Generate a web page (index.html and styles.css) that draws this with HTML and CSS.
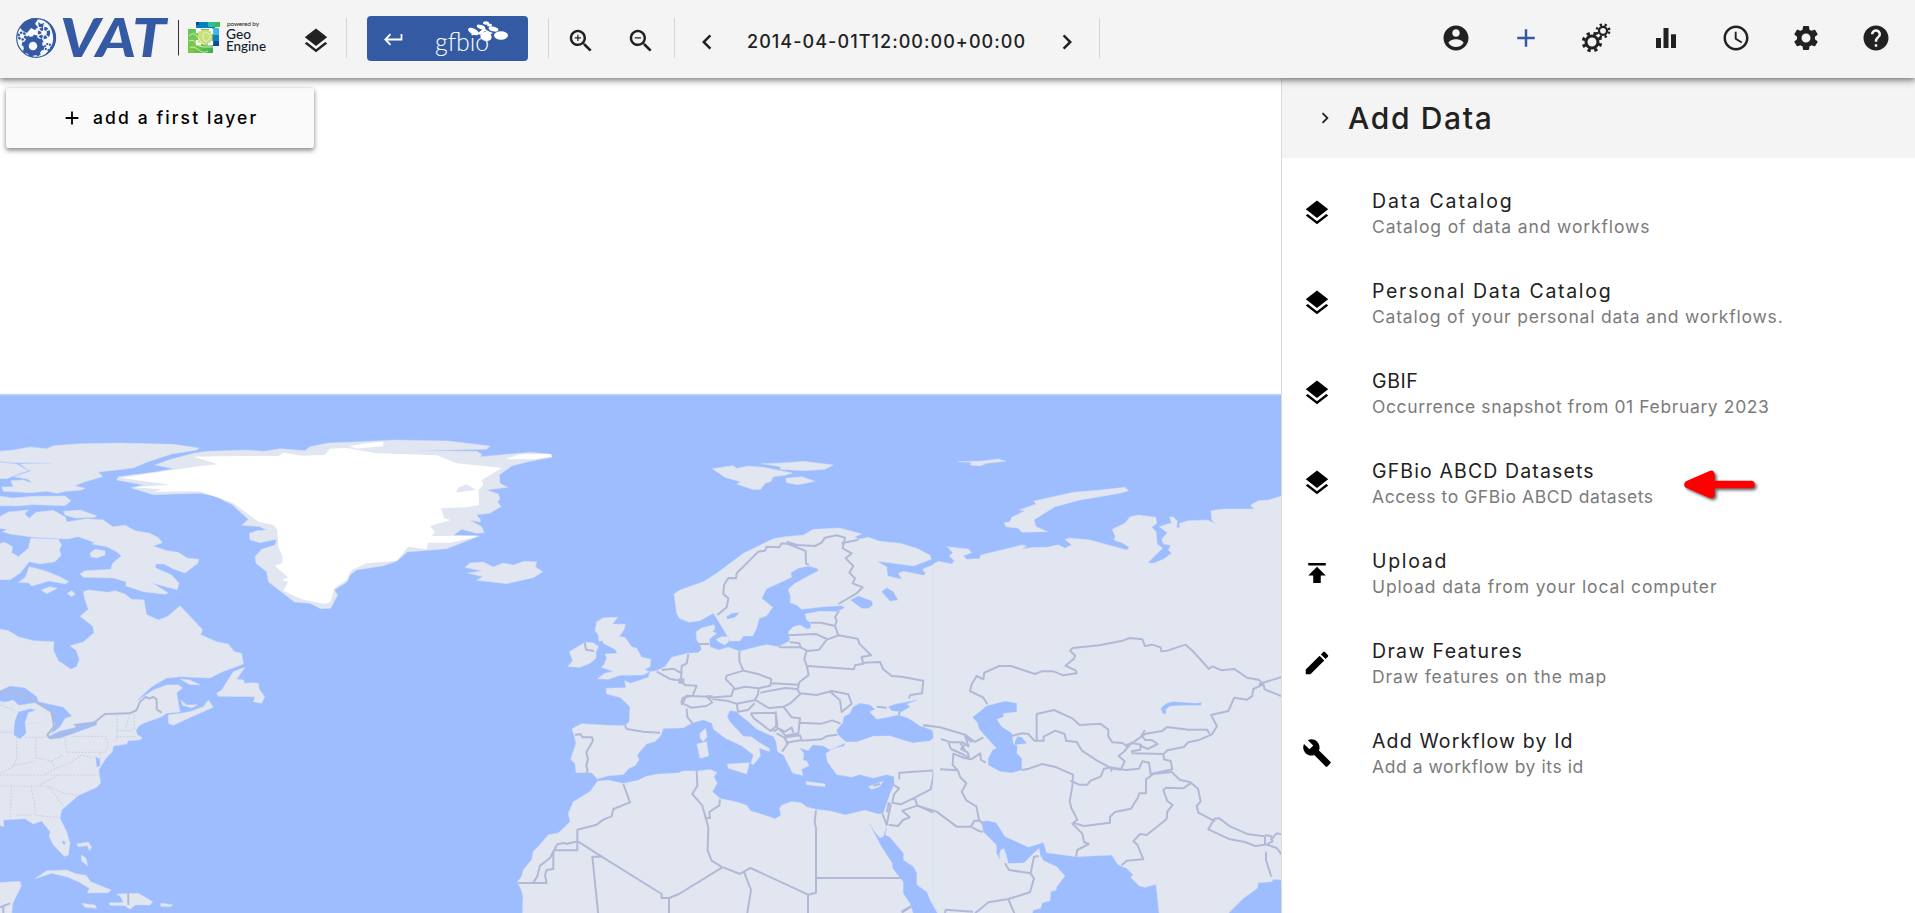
FILE: index.html
```html
<!DOCTYPE html>
<html lang="en">
<head>
<meta charset="utf-8">
<title>VAT</title>
<link rel="stylesheet" href="styles.css">
</head>
<body>
<svg class="defs" width="0" height="0">
  <symbol id="layers" viewBox="0 0 24 24"><path d="M11.99 18.54l-7.37-5.73L3 14.07l9 7 9-7-1.63-1.27-7.38 5.74zM12 16l7.36-5.73L21 9l-9-7-9 7 1.63 1.27L12 16z"/></symbol>
  <symbol id="left" viewBox="0 0 24 24"><path d="M15.41 7.41L14 6l-6 6 6 6 1.41-1.41L10.83 12z"/></symbol>
  <symbol id="right" viewBox="0 0 24 24"><path d="M10 6L8.59 7.41 13.17 12l-4.58 4.59L10 18l6-6z"/></symbol>
  <symbol id="add" viewBox="0 0 24 24"><path d="M19 13h-6v6h-2v-6H5v-2h6V5h2v6h6v2z"/></symbol>
  <symbol id="gear" viewBox="0 0 24 24"><path d="M19.14 12.94c.04-.3.06-.61.06-.94 0-.32-.02-.64-.07-.94l2.03-1.58c.18-.14.23-.41.12-.61l-1.92-3.32c-.12-.22-.37-.29-.59-.22l-2.39.96c-.5-.38-1.03-.7-1.62-.94l-.36-2.54c-.04-.24-.24-.41-.48-.41h-3.84c-.24 0-.43.17-.47.41l-.36 2.54c-.59.24-1.13.57-1.62.94l-2.39-.96c-.22-.08-.47 0-.59.22L2.74 8.87c-.12.21-.08.47.12.61l2.03 1.58c-.05.3-.09.63-.09.94s.02.64.07.94l-2.03 1.58c-.18.14-.23.41-.12.61l1.92 3.32c.12.22.37.29.59.22l2.39-.96c.5.38 1.03.7 1.62.94l.36 2.54c.05.24.24.41.48.41h3.84c.24 0 .44-.17.47-.41l.36-2.54c.59-.24 1.13-.56 1.62-.94l2.39.96c.22.08.47 0 .59-.22l1.92-3.32c.12-.22.07-.47-.12-.61l-2.01-1.58zM12 15.6c-1.98 0-3.6-1.62-3.6-3.6s1.62-3.6 3.6-3.6 3.6 1.62 3.6 3.6-1.62 3.6-3.6 3.6z"/></symbol>
</svg>

<header class="toolbar">
  <svg class="logo" viewBox="0 0 280 78">
    <circle cx="36" cy="38" r="19.3" fill="#f8fafd" stroke="#345aa4" stroke-width="1.2"/>
    <path fill="#345aa4" d="M20 28L24 22 31 18.500 38 19 35 24 38 27 35 30 31 28 27 33 23 31ZM42 18.500A20 20 0 0 1 50 52L42 57C50 51 54 44 53 36C52 28 48 22 42 18.500ZM38 22l3 2 3-1-1 4-4 0z"/>
    <g fill="none" stroke="#345aa4">
      <circle cx="33" cy="46" r="7" stroke-width="5.500"/>
      <circle cx="33" cy="46" r="10" stroke-width="2.600" stroke-dasharray="4 3.850"/>
      <circle cx="22" cy="36" r="3.400" stroke-width="2.400" stroke-dasharray="2.400 1"/>
      <circle cx="44" cy="33" r="4.500" stroke-width="3.400" stroke-dasharray="3 1.200"/>
      <circle cx="48" cy="47" r="3" stroke-width="2" stroke-dasharray="2 1"/>
    </g>
    <text class="vat" x="60" y="57" textLength="106" lengthAdjust="spacingAndGlyphs">VAT</text>
    <path d="M178.500 20v35.500" stroke="#333" stroke-width="1"/>
    <defs><linearGradient id="green" x1="0" y1="0" x2="1" y2="1"><stop offset="0" stop-color="#63c45b"/><stop offset=".5" stop-color="#7dc948"/><stop offset="1" stop-color="#35ab4f"/></linearGradient></defs>
    <path fill="#087fbd" d="M196 22h19v6h-19z"/><path fill="#2ebd9d" d="M208 22h7v5h-7z"/><path fill="#43b649" d="M215 22h5v5h-5z"/>
    <path fill="#3fb8e0" d="M212 28h7v7h-7z"/><path fill="#117fc0" d="M213 35h6v6h-6z"/><path fill="#0b4b9c" d="M213 41h6v5h-6zM196 22h3v3h-3z"/>
    <path fill="url(#green)" d="M188 29h25v24h-25z"/>
    <path fill="#c8df7c" d="M198 30h14v14h-14z"/>
    <g fill="none" stroke="#e8f5d4" stroke-width=".8"><path d="M189 36q4-4 7-1t4 6 6 4 7-2M189 41q5-2 7 2t8 4 9 0M190 47q5-1 9 3t9 1M203 35q1-4 5-2t1 6-5 1-1-5z"/></g>
    <path fill="none" stroke="#fff" stroke-width="2.300" d="M197 33v-3h4M209 30h3v4M212 41v3h-4M201 44h-4v-4"/>
    <text class="geo-small" x="227" y="26.200" textLength="32">powered by</text>
    <text class="geo" x="226" y="39" textLength="25" lengthAdjust="spacingAndGlyphs">Geo</text>
    <text class="geo" x="226" y="51" textLength="40" lengthAdjust="spacingAndGlyphs">Engine</text>
  </svg>
  <div class="cell layers-cell"><svg class="icon"><use href="#layers"/></svg></div>
  <a class="gfbio">
    <svg viewBox="0 0 161 45" width="161" height="45">
      <path fill="none" stroke="#fff" stroke-width="1.800" d="M34.500 18v5.500H18.500M23.500 18.200l-5.200 5.300 5.200 5.300"/>
      <text class="gfbio-text" x="68" y="35" textLength="54" lengthAdjust="spacingAndGlyphs">gfbio</text>
      <path fill="#345aa4" d="M104 7h16v10h-16z"/>
      <g fill="#fff"><ellipse cx="106.500" cy="15.500" rx="6" ry="2.900" transform="rotate(28 106.500 15.500)"/><ellipse cx="119" cy="20.500" rx="5.700" ry="4.600" transform="rotate(12 119 20.500)"/><ellipse cx="134" cy="19.500" rx="7" ry="4.200"/><ellipse cx="126.500" cy="13" rx="5" ry="2.400" transform="rotate(15 126.500 13)"/><ellipse cx="114" cy="11" rx="4.500" ry="2" transform="rotate(20 114 11)"/><ellipse cx="119" cy="7" rx="3" ry="1.700"/><ellipse cx="122.500" cy="9" rx="2.500" ry="1.500"/><path d="M111 17l6-5 4 3 5 2-4 2-4-4-5 4z"/></g>
    </svg>
  </a>
  <div class="cell zoom-cell">
    <svg class="icon" viewBox="0 0 24 24"><path d="M15.500 14h-.79l-.28-.27C15.410 12.590 16 11.110 16 9.500 16 5.910 13.090 3 9.500 3S3 5.910 3 9.500 5.910 16 9.500 16c1.610 0 3.090-.59 4.230-1.570l.27.28v.79l5 4.990L20.490 19l-4.990-5zm-6 0C7.010 14 5 11.990 5 9.500S7.010 5 9.500 5 14 7.010 14 9.500 11.990 14 9.500 14zM12 10h-2v2H9v-2H7V9h2V7h1v2h2v1z"/></svg>
    <svg class="icon" viewBox="0 0 24 24"><path d="M15.500 14h-.79l-.28-.27C15.410 12.590 16 11.110 16 9.500 16 5.910 13.090 3 9.500 3S3 5.910 3 9.500 5.910 16 9.500 16c1.610 0 3.090-.59 4.230-1.570l.27.28v.79l5 4.990L20.490 19l-4.990-5zm-6 0C7.010 14 5 11.990 5 9.500S7.010 5 9.500 5 14 7.010 14 9.500 11.990 14 9.500 14zM7 9h5v1H7z"/></svg>
  </div>
  <div class="cell time-cell">
    <svg class="icon"><use href="#left"/></svg>
    <span class="time">2014-04-01T12:00:00+00:00</span>
    <svg class="icon"><use href="#right"/></svg>
  </div>
  <nav class="actions">
    <svg class="icon" viewBox="0 0 24 24"><path d="M12 2C6.480 2 2 6.480 2 12s4.480 10 10 10 10-4.480 10-10S17.520 2 12 2zm0 3c1.660 0 3 1.340 3 3s-1.340 3-3 3-3-1.340-3-3 1.340-3 3-3zm0 14.200c-2.500 0-4.710-1.280-6-3.220.03-1.990 4-3.080 6-3.080 1.990 0 5.970 1.090 6 3.080-1.290 1.940-3.500 3.220-6 3.220z"/></svg>
    <svg class="icon blue"><use href="#add"/></svg>
    <svg class="icon" viewBox="0 0 30 30"><g fill="none" stroke="#212121"><circle cx="11" cy="19" r="6" stroke-width="3"/><circle cx="11" cy="19" r="8.700" stroke-width="3.200" stroke-dasharray="3.200 3.633" transform="rotate(8 11 19)"/><circle cx="22" cy="7.800" r="4" stroke-width="2.200"/><circle cx="22" cy="7.800" r="6.200" stroke-width="2.600" stroke-dasharray="2.200 2.669" transform="rotate(8 22 7.800)"/></g></svg>
    <svg class="icon" viewBox="0 0 24 24"><path d="M4 12h4v8H4zM10 4h4v16h-4zM16 9h4v11h-4z"/></svg>
    <svg class="icon" viewBox="0 0 24 24"><path d="M11.990 2C6.470 2 2 6.480 2 12s4.470 10 9.990 10C17.520 22 22 17.520 22 12S17.520 2 11.990 2zM12 20c-4.420 0-8-3.580-8-8s3.580-8 8-8 8 3.580 8 8-3.580 8-8 8zM12.500 7H11v6l5.250 3.150.75-1.230-4.500-2.670z"/></svg>
    <svg class="icon"><use href="#gear"/></svg>
    <svg class="icon" viewBox="0 0 24 24"><path d="M12 2C6.480 2 2 6.480 2 12s4.480 10 10 10 10-4.480 10-10S17.520 2 12 2zm1 17h-2v-2h2v2zm2.070-7.750l-.9.920C13.450 12.900 13 13.500 13 15h-2v-.5c0-1.100.45-2.100 1.170-2.830l1.240-1.260c.37-.36.59-.86.59-1.410 0-1.100-.9-2-2-2s-2 .9-2 2H8c0-2.210 1.790-4 4-4s4 1.790 4 4c0 .88-.36 1.680-.93 2.250z"/></svg>
  </nav>
</header>

<main class="workspace">
  <section class="map-pane">
    <svg class="map" viewBox="0 78 1281 835">
      <path class="land" d="M0 394.500h1281v2H0z"/>
      <path class="sea" d="M-2 395h1285v520H-2z"/>

      <!-- North America and Greenland -->
      <g transform="translate(0 390) scale(.33333)">
        <path class="land" d="M-5 184L40 180 90 171 140 176 160 167 240 161 360 159 520 163 597 174 590 180 515 192 440 217 400 234 350 240 295 246 308 260 255 275 225 287 255 295 245 300 200 304 170 310 140 304 90 308 10 304 5 291 40 290 32 272 70 270 95 279 85 268 42 260 95 242 85 240 60 222 160 219 40 218 -5 214ZM-5 216L50 222 85 242 60 250 20 266 -5 266ZM-5 318L40 324 100 319 195 318 213 332 195 347 100 344 50 348 -5 347Z"/>
        <path class="land" d="M-5 382L25 366 85 360 74 372 88 385 108 367 160 361 197 382 200 396 260 386 310 390 338 410 376 406 405 422 450 430 475 443 487 458 460 468 500 482 535 487 562 504 597 508 593 520 555 549 520 537 492 522 468 522 466 533 515 555 537 580 532 599 458 580 505 609 495 613 430 605 378 588 378 575 340 564 250 562 240 552 255 542 332 538 338 520 364 497 350 485 320 470 275 462 285 458 235 440 200 447 100 442 30 432 8 425 22 418 -5 415ZM-5 462L14 457 38 470 35 488 55 500 85 475 92 445 175 448 185 465 178 480 184 495 165 515 120 522 88 515 60 550 30 569 -5 569ZM88 530L135 542 180 560 206 575 195 582 148 573 95 588 85 578 55 577 76 562ZM190 364L240 360 290 377 285 382 225 384 195 375ZM270 490L285 478 315 482 315 495 290 504 272 500ZM124 600L150 590 172 595 140 611ZM202 610L215 602 226 612 215 620Z"/>
        <path class="land" d="M-5 716L25 722 55 740 100 752 162 755 160 780 175 812 212 838 230 830 238 808 228 780 210 767 250 756 282 728 278 708 240 679 265 658 255 630 250 605 265 600 325 607 345 602 375 612 395 628 432 630 440 674 476 690 505 678 540 647 608 719 602 734 650 755 685 762 703 785 725 790 730 822 665 846 630 864 540 860 500 864 455 890 408 934 415 930 460 900 500 885 535 884 548 894 530 908 540 966 500 970 485 980 435 998 420 1005 408 1020 412 1035 427 1043 420 1050 385 1052 380 1062 340 1068 337 1085 318 1105 296 1140 302 1178 290 1192 236 1216 185 1260 180 1285 200 1325 210 1360 205 1395 193 1399 160 1365 148 1340 150 1325 125 1293 100 1302 75 1286 10 1290 12 1310 -5 1305Z"/>
        <path class="land" d="M650 910L665 900 700 845 735 832 710 868 732 870 732 880 760 878 775 880 778 898 794 920 785 940 760 935 765 920 655 919ZM505 975L540 970 570 965 610 950 625 930 640 952 575 980 520 1006 505 1000ZM540 867L570 870 600 884 570 884ZM543 930L560 945 592 944 575 954 548 946ZM105 1466L140 1442 200 1440 230 1452 258 1456 272 1475 333 1500 325 1508 262 1509 268 1495 235 1475 205 1462 155 1450ZM245 1540L285 1545 290 1555 255 1552ZM328 1538L370 1538 362 1520 350 1512 415 1510 458 1535 450 1545 405 1545 390 1558 375 1547 330 1546ZM482 1540L518 1544 512 1550 482 1549ZM230 1362L265 1356 274 1370 270 1383 262 1367 235 1370ZM245 1395L258 1405 263 1428 244 1412ZM-5 1478L60 1474 64 1488 48 1520 38 1542 35 1575 -5 1575Z"/>
        <path class="sea" d="M-5 905L30 888 75 894 110 920 115 935 190 952 215 978 195 985 180 1010 155 1030 165 1002 150 965 105 938 60 945 -5 932ZM42 1035L43 990 55 966 92 956 108 960 75 995 78 1030 60 1047ZM145 1040L180 1023 230 1012 220 1003 290 994 290 1005 180 1045 150 1047ZM287 1100L290 1130 300 1128 300 1108ZM188 1352l8 4-3 8-6-5z"/>
        <path class="land" d="M75 1000L85 968 110 960 140 965 135 1000ZM-5 942L40 930 60 950 45 990 40 1020 -5 1022Z"/>
        <path class="border" d="M-5 908L30 902 100 930 155 965 162 1010 142 1035 150 1045 180 1036 220 1025 235 1005 280 1000 315 972 390 970 410 960 420 935 437 921 447 926 460 921 470 928 470 958 485 968M385 1510v35M0 1552l30-12M10 1550v20"/>
        <path class="state" d="M0 945l45 15M0 1027h40M50 1042v60l-10 28-40 20M75 1042h70M107 1042v62M195 1042l5 45h115l10-20-8-28H215M107 1102l48 12 35-20M155 1114l10 22 50-20 30-22 30 10M40 1127l70-14M0 1155h298M0 1188h145l40 20 50 8M145 1188l45 60M35 1188l-5 98M92 1190l12 50v35l70 8M50 1275h50M118 1185l60-30M165 1136l-32 18M352 975v45l-4 36M390 972l-15 50M403 972v48M352 1022h50M350 1040h60M300 1090v35"/>

        <path class="land" d="M465 225L505 210 580 190 620 184 740 180 790 184 840 176 915 182 930 170 985 159 1080 155 1180 150 1345 153 1470 168 1460 178 1250 182 1430 184 1445 192 1442 200 1590 187 1655 193 1656 202 1590 214 1535 228 1498 255 1500 280 1523 292 1460 300 1495 312 1500 327 1493 335 1503 350 1482 362 1470 370 1430 374 1442 390 1440 396 1410 390 1445 410 1453 428 1430 430 1385 418 1360 436 1438 438 1340 476 1222 486 1190 514 1150 527 1070 540 1050 555 1042 575 1003 600 1013 615 992 655 962 656 930 640 883 636 805 575 800 545 768 520 765 500 785 478 825 465 830 448 780 458 750 450 748 430 770 422 800 420 780 410 725 406 745 388 695 343 667 330 665 322 600 310 460 314 392 293 430 285 350 270 355 260 460 247 520 236Z"/>
        <path class="snow" d="M360 263L600 228 655 223 580 200 720 198 835 198 850 188 905 197 975 195 990 176 1040 174 1130 190 1310 196 1370 220 1505 234 1446 270 1450 284 1436 300 1437 345 1400 352 1322 355 1333 385 1352 390 1290 408 1305 425 1295 438 1430 437 1425 442 1350 458 1285 458 1280 478 1225 470 1190 512 1145 516 1100 520 1055 540 1040 570 1003 595 992 635 975 642 905 628 850 602 865 575 845 570 864 562 825 528 847 518 848 500 835 470 832 420 820 405 775 395 700 340 600 304 462 305 485 298 400 292 510 284ZM1048 168L1110 158 1150 155 1150 168 1070 176ZM1517 207L1560 193 1650 192 1655 200 1600 208Z"/>
        <path class="land" d="M1370 306l5-12 25-10 25 15z"/>
      </g>
      <g transform="translate(330 390) scale(.33333)">
        <path class="land" d="M405 532L420 519 460 516 490 531 520 519 550 525 582 514 620 515 616 530 638 545 610 563 530 581 440 571 458 560 413 549 455 543Z"/>
      </g>

      <!-- Europe and Africa -->
      <g transform="translate(540 440) scale(.33333)">
        <path class="land" d="M96 866L125 851 205 856 255 857 268 845 270 800 240 772 200 762 198 745 258 743 254 722 272 730 325 712 330 695 350 692 375 680 395 652 442 640 475 638 485 628 480 612 470 600 468 575 485 564 522 554 525 565 518 575 530 580 508 598 510 620 535 630 565 622 600 634 660 618 680 614 715 620 745 605 750 600 745 575 760 560 780 555 800 567 812 565 812 548 800 540 795 522 840 514 890 515 915 503 905 497 850 500 785 508 770 495 750 488 752 470 745 448 765 430 835 392 832 385 805 378 775 385 752 398 755 412 680 446 665 475 698 502 680 527 658 535 650 565 638 588 610 588 600 603 570 603 560 585 530 535 520 520 480 542 447 547 418 535 410 520 402 462 420 450 490 425 530 400 610 340 700 296 735 290 790 285 820 268 900 264 965 282 945 290 955 298 985 292 1020 304 1080 310 1130 325 1170 345 1174 358 1120 378 1060 370 1010 364 1040 380 1043 408 1085 418 1075 400 1090 394 1150 406 1157 400 1147 388 1200 366 1210 1425 -53 1425 -51 1369 -57 1347 -68 1327 -55 1309 -50 1289 -25 1259 -20 1234 0 1214 25 1184 55 1179 90 1145 85 1120 100 1085 150 1055 175 1020 155 998 108 998 105 970 92 958 108 910 102 885Z"/>
        <path class="land" d="M170 545L190 533 233 532 218 552 256 553 253 568 238 590 255 592 275 620 290 625 305 652 333 658 330 680 315 688 328 695 310 705 240 706 205 718 172 716 195 700 220 694 183 682 192 674 200 655 195 642 232 640 225 628 190 610 188 602 177 604 175 585 165 572ZM88 635L135 607 160 608 176 620 168 635 168 655 150 670 120 682 83 680 98 662ZM528 598L545 590 566 590 566 605 555 615 535 605ZM517 86L578 77 590 85 625 78 670 82 757 99 735 106 700 110 692 125 675 130 662 148 640 149 590 132 602 126 555 112ZM665 71L740 68 790 64 880 75 855 88 790 92 720 88 722 80ZM737 115L785 110 825 124 775 134 740 128Z"/>
        <path class="sea" d="M170 1018L205 1008 250 1004 268 985 285 978 298 960 292 945 320 912 345 905 362 888 370 866 430 864 455 850 490 840 515 850 520 868 555 895 605 918 640 945 632 970 640 975 662 948 658 925 690 935 688 925 655 905 635 890 610 888 570 845 562 830 570 812 590 815 600 826 625 845 650 868 700 890 708 905 712 935 730 945 745 975 758 1000 790 1007 785 988 808 978 800 962 790 960 792 940 780 925 805 932 818 915 850 918 870 930 915 910 912 918 880 925 857 940 862 965 872 980 890 1004 935 1012 960 1004 1000 1015 1040 1004 1062 1010 1062 1035 1050 1060 1040 1090 1030 1118 1015 1122 975 1110 915 1124 870 1112 830 1108 800 1100 785 1088 755 1084 725 1095 718 1105 722 1125 705 1136 690 1130 632 1112 620 1095 590 1085 540 1075 518 1055 532 1030 522 1010 532 997 510 988 475 992 430 992 415 998 350 1002 320 1008 295 1020 250 1030 205 1020 175 1022ZM918 905L895 885 890 870 908 850 912 830 930 820 940 800 960 790 990 795 1005 808 988 815 1010 838 1030 835 1075 825 1105 835 1140 858 1175 870 1185 890 1170 902 1120 908 1090 900 1050 887 1000 888 950 905ZM1045 800L1065 793 1132 780 1100 792 1110 800 1085 815 1055 812ZM988 1150L1000 1170 1020 1195 1030 1190 1040 1160 1035 1185 1050 1192 1090 1240 1090 1260 1120 1280 1130 1300 1130 1335 1160 1355 1170 1380 1195 1425 1122 1425 1110 1390 1090 1360 1090 1325 1058 1285 1057 1270 1025 1220ZM932 480L955 468 995 483 998 495 985 505 965 505ZM1025 455L1040 443 1060 455 1073 480 1050 483ZM560 530L575 520 597 518 585 532 562 537Z"/>
        <path class="land" d="M562 972L628 968 620 1002 565 985ZM470 912L500 905 506 948 480 955 475 930ZM480 880L497 865 501 890 490 905 480 893ZM798 1024L855 1032 855 1040 800 1034ZM985 1040L1030 1024 1018 1040 995 1048Z"/>
        <path class="border" d="M532 525L560 502 565 475 550 462 552 435 565 414 588 415 590 400 655 335 675 332 680 320 718 322 725 310 745 312 797 333 798 370 806 375M740 305L770 315 825 318 845 308 855 293 890 286 915 293 908 325 935 340 917 355 940 378 928 398 945 415 938 430 968 442 950 460 895 492M905 310L955 299M475 612h32M134 607l4 22 24 4M813 548l30 0 42 10 5-15-5-12 12-18M885 558l10 28-32 12-35-16-85 4M750 606l28 4 4 12h-65M782 622l20 11 35-4 25-32M895 586l58 10 5 15 35 35-28 5 5 20-25 5-3 12-140-10M800 632l-7 25 8 24 5 24-28 22-5 22M970 668l50-2 10 22 25 20 30 2 65 12-4 38-35 5-5 10M598 634l0 30 12 28-50 15-3 10 25 26-8 25-68 5M612 692l42 10 40 15-3 20-35 8-40-5-33 8-2-5M692 730l85 4M656 745l-2 18-10 18-55 10-25-8-45-6-3-8h-18M646 780l40 24 45-4 20-10 30-28-10-15-35-3-75 14M780 760l50 5 45-12 50 10 10 28-30 25-5-35-32-28M590 790l4 25 30-5 20-20M632 820l75-2M632 820l10 15 50 38 20-18-5-38M730 800l25 32 25 3-5 45-38 7-28-28-2-45M780 848l65 3 32-10 25 10M784 902l60-4 18-10 30-4M735 892l45-6 5 14-45 8zM710 880l22 12 12 18-18 25M700 875l15-10 20 10 20-12 5 15M445 642l-5 28-15 8-2 45 12 12 35 2-12 30-30 6-4 15 30 15 45-5 20-12M350 695l40 22 35 5M365 690l35-4 25 14M418 718h12v10h-12zM440 806l2 25 15 18M425 795l15-28 60 3 15 15M255 857l5 10 50 8 50 3M105 885l15-3 8 10 28 0 3 10-20 35 5 20-5 20 4 15-8 20M470 992l2 45-15 25 30 35 18 65-2 70 12 30 32 20-130 80-30 12h-22v-12L185 1250 110 1202M540 1078l-2 18-30 20 2 18-12 0M250 1032l20 55-50 20-5 22-25 10-20 15-58 15v62H42L30 1254 0 1277-8 1309-20 1327M110 1205l-20 4-8 3-10-3-20 4-12 22v52l-20 3-5 15 5 24H-66M190 1250h-33l18 175M550 1282l50 20 32-18 172 80 24-6V1165l-4-20 4-34M613 1298l20 52-12 75M804 1364v60M387 1375v50M830 1314h252M1085 1415l28-16M1010 800l30 3M1078 815v10M1027 1120l13 35 12-60-6-6-5 28M1062 1035l15 10-15 18-5 25 25 5 42-20 8 24-45 15 22 20-20 8-15 18-28-4M1132 1097l68 30M1078 1018v-20l122-8M1180 990v20l-8 38-48 25M1150 856l50 5M1183 897h17M1000 1037l20-5"/>
      </g>

      <!-- Asia -->
      <g transform="translate(880 440) scale(.33333)">
        <path class="land" d="M160 372L175 364 215 372 223 362 208 348 218 338 202 320 265 327 275 338 250 347 260 358 298 356 303 345 425 315 440 318 425 327 460 322 500 322 535 314 555 325 575 315 555 298 570 294 630 300 740 330 748 322 725 308 702 300 706 290 697 268 735 250 750 230 775 225 828 232 830 250 815 262 828 275 832 312 848 325 803 368 820 370 850 358 875 340 865 330 872 316 850 312 845 298 862 278 838 260 875 248 868 232 880 230 892 243 890 262 900 264 898 250 925 242 980 240 1008 250 995 240 993 212 1030 207 1122 207 1112 195 1135 182 1165 180 1210 167 1210 1320 1180 1318 1175 1325 1135 1328 1132 1345 1090 1375 1040 1425 838 1425 828 1333 795 1342 778 1338 752 1312 760 1305 740 1285 715 1275 695 1245 590 1250 500 1238 480 1240 490 1262 530 1280 555 1308 530 1340 528 1350 512 1355 510 1382 487 1388 482 1405 460 1410 455 1425 176 1425 160 1380Z"/>
        <path class="land" d="M372 248L390 245 395 232 435 212 418 210 468 192 462 183 520 170 580 157 660 150 735 142 746 152 720 160 600 180 525 200 462 240 468 260 503 275 425 277 415 265 378 260ZM232 65L305 63 330 60 355 57 378 64 320 70 300 78 270 75 275 67Z"/>
        <path class="sea" d="M305 1145L320 1142 348 1148 375 1190 445 1222 490 1208 500 1240 482 1250 478 1225 465 1235 432 1268 385 1270 378 1240 368 1228 358 1240 360 1258 350 1240 350 1215 310 1175ZM278 832L320 798 375 784 410 790 410 815 370 820 370 830 350 838 365 860 395 880 400 912 412 918 410 940 425 955 425 990 395 998 360 994 325 975 325 955 338 930 350 925 298 868 293 848ZM405 905L412 890 425 892 440 910 405 914ZM843 805L860 790 880 785 945 790 965 788 962 796 905 796 870 798 857 808 858 822 848 820Z"/>
        <path class="border" d="M322 793l-12-20-40-20 5-20 15-25 20 10 3-20 45-20 35 0 72 24 20-8 35 0 30 12 40-6-2-8-32-15 25-20 5-10-16-15 8-8 80-8 70-14 22-8 37 4 8 20 22-4 25 8 2 12 18-2 55-18 20 18 50 55 10-8 28 12 38-4 38 26 35 6 14 14-30 14-4 22-15 10-38-6-18 40-52 12 18 34-15 24-42 18-30 6-12 14-50 10-10 10M1136 732l72-22M1150 732l4 16 54 22M470 900v-78l52-12 55 25 22 20 62-4 24 18v20l12 18 30 2 15 10 55-38 50-8 14-12 65 8 55 0 8 12M395 888l30-8 20 2 18 20h28v-12l35-18 28 10 4 20 32 4 15 25 45 30 45 24-2 10M740 915l15-6 28 5-2 15-25 5 2 6 92 2M785 885l10 15 20 0 18 12-30 15-25-12M795 870l-12 18M850 940l2 18 20 5 5 25-65 14-5-34-20-4-10 22-40 4-45-8-20 4-10 24-30 12-10 12-25 0-26-12M690 985l32 4 12-25-18-16 15-12 25-30M425 990l22-4 40-14 42 10 50 22-2 35-8 45 5 20 18 35-15 12 30 30 5 25 14 6-34 18-4 20M577 1148l35 10 78-10v-18l15-14 48-10 20-32 5-14 20 0v-42l22-16 55-6 25 24 30 6 24 20 8 38-12 14 5 20 50 26M935 1027l-25 18-52-2-8 8 12 32 16 12-16 20-2 22-60 48-20-3-20 22 12 10 18 44-50 4-15 14M1003 1136l-18 32 65 30 45 8 30 12 30-4v-25l-50-6-55-24-32-24zM1155 1185l18 4 5 15-18 10 30 10 15 20M1158 1235v25l16 50M1172 1200l18-20 16 3M130 856l50 6 40 12 35 10 30 22 25-14M183 897l30 10 35 0 18 12-10-28 20 16M205 907l8 20 40 18 15 12-5-20-20-10 15-16M240 907l15 25M220 940l-2 35 15 16-53-3M218 940l35 14 20 4 28-18 2 20 14 8M233 990l8 22 18 18-14 25 14 26 30 18 8 40 18 20M112 1097l58 18 60 45 42 0 12-18 18 0M272 1160l18 10 18 6M375 1270l12 20 65 10 10-50 14-2M452 1300l10 15-12 42-65 20-60 10-30 25-10 7M385 1378l20 46M195 1419l2-10 82 6M65 1418l28-18"/>
        <path class="land" d="M362 1230l10-4 5 20-5 18-12-8z"/>
      </g>
    </svg>
    <button class="first-layer"><svg class="small-icon"><use href="#add"/></svg><span>add a first layer</span></button>
  </section>

  <aside class="panel">
    <div class="panel-head"><svg class="small-icon"><use href="#right"/></svg><h1>Add Data</h1></div>
    <ul class="sources">
      <li><svg class="icon"><use href="#layers"/></svg><div><h2>Data Catalog</h2><p>Catalog of data and workflows</p></div></li>
      <li><svg class="icon"><use href="#layers"/></svg><div><h2>Personal Data Catalog</h2><p>Catalog of your personal data and workflows.</p></div></li>
      <li><svg class="icon"><use href="#layers"/></svg><div><h2>GBIF</h2><p>Occurrence snapshot from 01 February 2023</p></div></li>
      <li><svg class="icon"><use href="#layers"/></svg><div><h2>GFBio ABCD Datasets</h2><p>Access to GFBio ABCD datasets</p></div>
        <svg class="arrow" viewBox="0 0 80 40"><path d="M9 18.500L32 8.500V28.500Z M30 18.500H72" /></svg></li>
      <li><svg class="icon" viewBox="0 0 24 24"><path d="M5 4v2h14V4H5zm0 10h4v6h6v-6h4l-7-7-7 7z"/></svg><div><h2>Upload</h2><p>Upload data from your local computer</p></div></li>
      <li><svg class="icon" viewBox="0 0 24 24"><path d="M3 17.250V21h3.750L17.810 9.940l-3.750-3.750L3 17.250zM20.710 7.040c.39-.39.39-1.020 0-1.410l-2.340-2.340c-.39-.39-1.020-.39-1.410 0l-1.830 1.830 3.750 3.750 1.830-1.830z"/></svg><div><h2>Draw Features</h2><p>Draw features on the map</p></div></li>
      <li><svg class="icon" viewBox="0 0 24 24"><path d="M22.700 19l-9.100-9.100c.9-2.300.4-5-1.500-6.900-2-2-5-2.400-7.400-1.300L9 6 6 9 1.600 4.700C.4 7.100.9 10.100 2.900 12.100c1.900 1.900 4.600 2.400 6.900 1.500l9.100 9.100c.4.4 1 .4 1.400 0l2.300-2.300c.5-.4.5-1.100.1-1.400z"/></svg><div><h2>Add Workflow by Id</h2><p>Add a workflow by its id</p></div></li>
    </ul>
  </aside>
</main>
</body>
</html>
```
FILE: styles.css
```css
* { box-sizing: border-box; }
body { margin: 0; height: 913px; overflow: hidden; display: flex; flex-direction: column; background: #fff; color: #212121; font-family: Inter, "Open Sans", sans-serif; }
h1, h2, p, ul { margin: 0; padding: 0; }
.defs { display: none; }
.icon { width: 30px; height: 30px; fill: currentColor; flex: none; display: block; }
.small-icon { width: 22px; height: 22px; fill: currentColor; flex: none; display: block; }

.toolbar { position: relative; z-index: 2; flex: none; height: 78px; display: flex; align-items: flex-start; background: #f4f4f4; box-shadow: 0 2px 5px rgba(0,0,0,.4), 0 4px 8px rgba(0,0,0,.16); }
.logo { width: 280px; height: 78px; flex: none; }
.vat { font: italic 900 53px Lato, sans-serif; fill: #345aa4; }
.geo { font: 500 12.500px Lato, sans-serif; fill: #111d30; }
.geo-small { font: 6.500px Lato, sans-serif; fill: #222; }
.cell { height: 40px; margin-top: 18px; display: flex; align-items: center; border-right: 1px solid #d4d4d4; }
.layers-cell { width: 67px; padding: 5px 0 0 21px; }
.gfbio { width: 161px; height: 45px; margin: 16px 0 0 20px; border-radius: 4px; background: #345aa4; }
.gfbio svg { display: block; }
.gfbio-text { font: 300 26px Lato, sans-serif; fill: #fff; }
.zoom-cell { width: 147px; padding: 5px 0 0 38px; gap: 30px; background: linear-gradient(#d4d4d4, #d4d4d4) 20px 0 / 1px 100% no-repeat; }
.time-cell { width: 425px; padding: 7px 0 0 17px; }
.time { flex: none; width: 279px; margin: 0 26px 0 25px; font-size: 18px; font-weight: 500; letter-spacing: 1.050px; white-space: nowrap; }
.actions { display: flex; gap: 40px; margin: 23px 0 0 341px; }
.blue { color: #345aa4; }

.workspace { flex: 1; display: flex; min-height: 0; }
.map-pane { position: relative; width: 1281px; flex: none; }
.map { display: block; width: 1281px; height: 835px; }
.land { fill: #e1e6f1; stroke: #d2def5; stroke-width: 1.500; stroke-linejoin: round; }
.sea { fill: #9ebdff; stroke: #b3caff; stroke-width: 1; stroke-linejoin: round; }
.snow { fill: #fff; }
.border { fill: none; stroke: #b1b9d6; stroke-width: 6; stroke-linejoin: round; }
.state { fill: none; stroke: #cfd4e4; stroke-width: 3.500; stroke-dasharray: 6 4; }
.first-layer { position: absolute; left: 6px; top: 10px; width: 308px; height: 60px; padding: 0 0 1px 55px; display: flex; align-items: center; gap: 10px; border: 0; border-radius: 2px; background: #fafafa; color: #000; font: 500 17.500px Inter, sans-serif; letter-spacing: 2.100px; white-space: nowrap; box-shadow: 0 3px 5px rgba(0,0,0,.3), 0 1px 4px rgba(0,0,0,.25); }

.panel { flex: 1; border-left: 1px solid #dcdcdc; background: #fff; }
.panel-head { height: 80px; padding-left: 32px; display: flex; align-items: center; gap: 12px; background: #f4f4f4; }
.panel-head h1 { font-size: 30px; font-weight: 500; letter-spacing: 1.650px; }
.sources { list-style: none; padding-top: 10px; }
.sources li { position: relative; height: 90px; padding: 0 20px; display: flex; align-items: center; gap: 40px; white-space: nowrap; }
.sources .icon { color: #000; }
.sources h2 { font-size: 19.500px; line-height: 26px; font-weight: 400; letter-spacing: 1.700px; }
.sources p { font-size: 17.500px; line-height: 25px; color: #7b7b7b; letter-spacing: .880px; }
.sources li:nth-child(1) h2 { letter-spacing: 1.900px; }
.sources li:nth-child(2) p { letter-spacing: .800px; }
.sources li:nth-child(3) h2 { letter-spacing: .600px; }
.sources li:nth-child(3) p { letter-spacing: .620px; }
.sources li:nth-child(4) h2 { letter-spacing: 1.120px; }
.sources li:nth-child(4) p { letter-spacing: .560px; }
.sources li:nth-child(6) h2 { letter-spacing: 1.350px; }
.sources li:nth-child(7) h2 { letter-spacing: 1.150px; }
.sources li:nth-child(7) p { letter-spacing: .560px; }
.arrow { position: absolute; left: 397px; top: 28px; width: 80px; height: 40px; overflow: visible; fill: #f00; stroke: #f00; stroke-width: 7.500; stroke-linecap: round; stroke-linejoin: round; filter: drop-shadow(2px 2px 1.500px rgba(0,0,0,.6)); }
```
